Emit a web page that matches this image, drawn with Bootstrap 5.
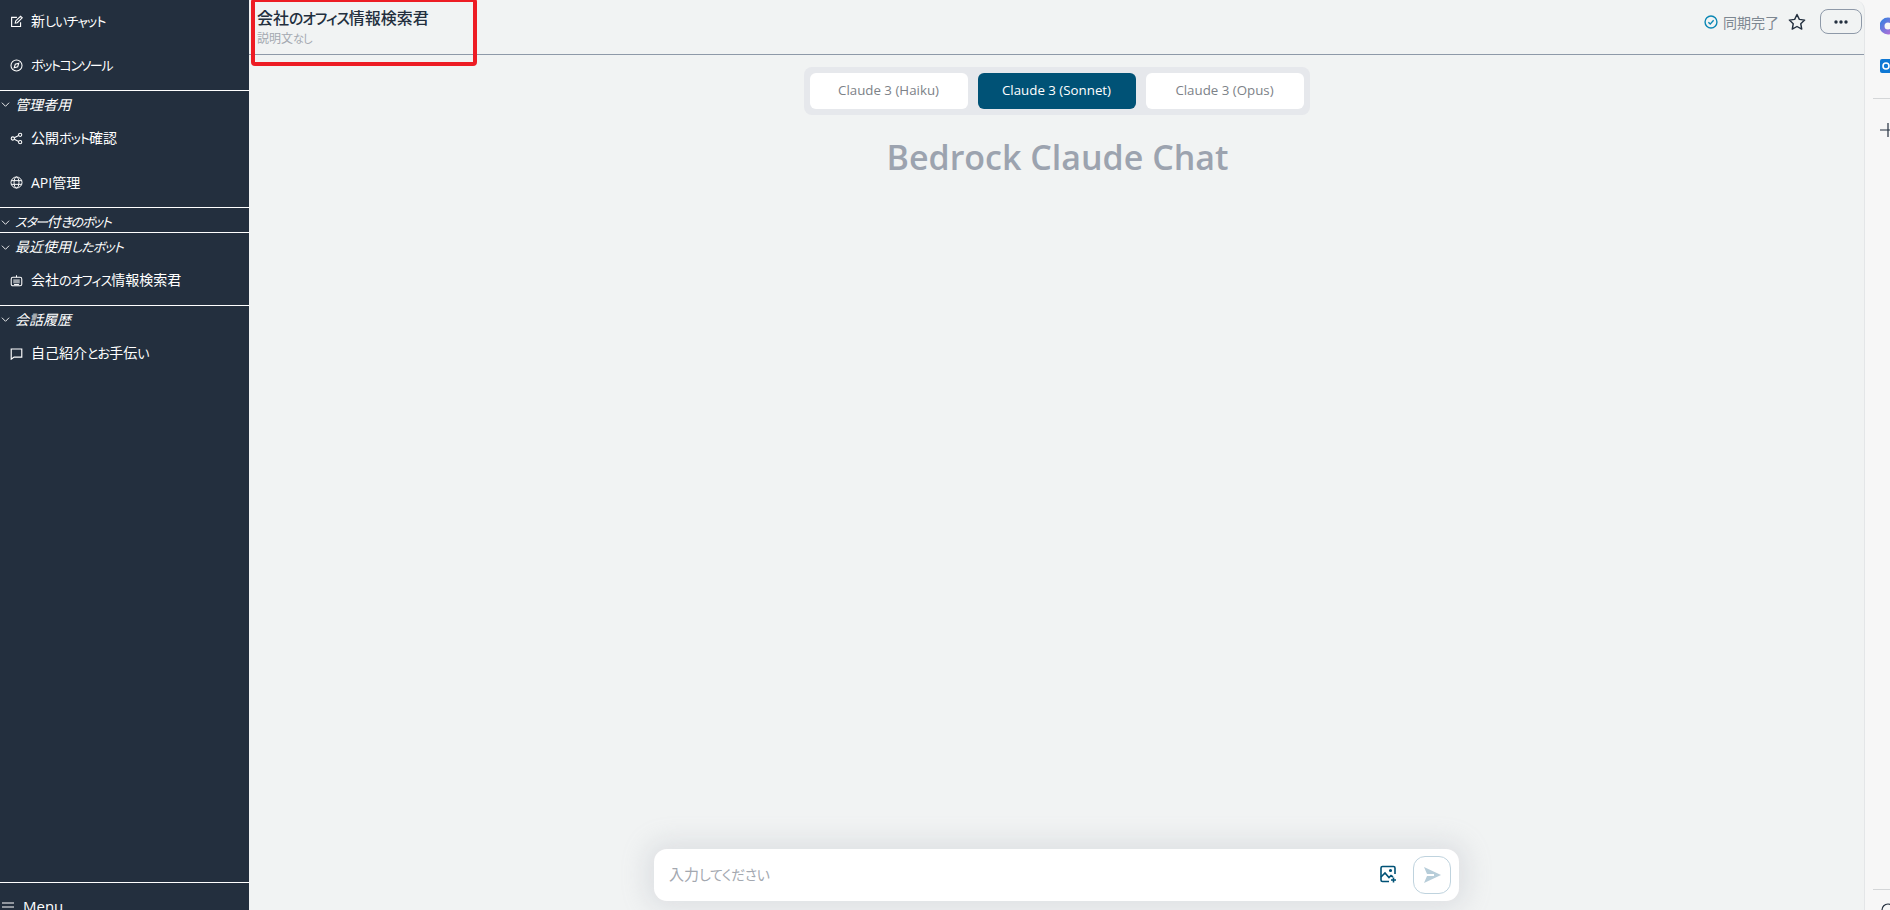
<!DOCTYPE html>
<html lang="ja">
<head>
<meta charset="utf-8">
<title>Bedrock Claude Chat</title>
<link href="https://cdn.jsdelivr.net/npm/bootstrap@5.3.0/dist/css/bootstrap.min.css" rel="stylesheet">
<style>
html,body{height:100%;overflow:hidden}
body{font-family:"Open Sans","Noto Sans CJK JP",sans-serif;font-feature-settings:"palt";background:#f7f7f7;color:#232f3e;font-size:14px}
.kn{font-size:.93em;letter-spacing:-.07em}
.kn-tight{letter-spacing:-.11em}
.app-shell{height:910px;position:relative}
.side-nav{width:249px;background:#232f3e;color:#fff;flex:none}
.nav-row{height:44px;padding-left:10px;padding-bottom:2px;gap:8px;font-size:14px;color:#fff}
.nav-row svg{width:13px;height:13px;flex:none}
.sec-head{height:26px;padding-left:1px;gap:5px;font-style:italic;font-size:14px;color:#fff}
.sec-head svg{width:9px;height:9px;flex:none}
.sec-short{height:24px;padding-top:4px}
.sec-low{padding-top:2px}
.sec-rule{border-top:1px solid #fff;margin-top:2px}
.nav-foot{border-top:1px solid #fff;height:28px;padding:13px 0 0 2px;gap:9px;margin-top:auto;overflow:hidden;line-height:20px;font-size:15px}
.nav-foot svg{width:12px;height:10px;flex:none;margin-top:6px}
.main-pane{width:1616px;background:#f1f3f3;border-right:1px solid #e4e6e8;border-top-right-radius:10px;position:relative;overflow:hidden}
.top-bar{height:55px;border-bottom:1px solid #8e99a8;padding:8px 2px 0 8px}
.bot-title{font-size:16px;font-weight:500;line-height:20px;color:#232f3e}
.bot-desc{font-size:12px;line-height:16px;margin-top:3px;color:#a3a8b0}
.sync-state{color:#7d8791;font-size:14px;gap:5px;margin-right:8px}
.more-btn{width:42px;height:25px;border:1px solid #8e99a8;border-radius:8px;margin-left:13px;background:transparent;padding:0;margin-top:-1px}
.model-bar{background:#e6e8ec;border-radius:8px;padding:6px;gap:10px;width:506px;margin:12px auto 0}
.model-btn{width:158px;height:36px;border-radius:6px;background:#fff;border:0;color:#7d8288;font-size:13.3px;padding:0}
.model-on{background:#005276;color:#fff}
.hero-title{font-size:34px;font-weight:600;color:#9ca3af;line-height:48px;margin:18px 0 0 2px;text-align:center}
.composer-zone{margin-top:auto;height:80px;padding-top:19px}
.composer{width:805px;height:52px;margin:0 auto;background:#fff;border-radius:13px;box-shadow:0 0 24px 9px rgba(160,165,178,.22);padding:0 8px 2px 15px}
.composer-hint{color:#a3a8b0;font-size:15px}
.composer-hint .kn{letter-spacing:-.03em}
.attach-btn{width:18px;height:18px;margin-right:16px;flex:none}
.send-btn{width:38px;height:38px;border:1px solid #bfd3de;border-radius:12px;background:#fff;padding:0;margin-top:2px}
.red-mark{position:absolute;left:251px;top:-2px;width:226px;height:68px;border:4px solid #ed1c24;border-radius:4px;pointer-events:none}
.app-rail{flex:1;position:relative;overflow:hidden}
.rail-rule{height:1px;background:#d4d6d8;margin-left:8px}
.rail-icon{width:16px;height:18px;margin-left:15px;flex:none}
</style>
</head>
<body>
<div class="app-shell d-flex">
  <aside class="side-nav d-flex flex-column">
    <div class="nav-row d-flex align-items-center"><svg viewBox="0 0 16 16" fill="none" stroke="#fff" stroke-width="1.4"><path d="M13 9v5.2H2V3h6.5"/><path d="M6.5 10l.5-2.7L13 1.5l2 2-6 6z"/></svg><span>新<span class="kn">しいチャット</span></span></div>
    <div class="nav-row d-flex align-items-center"><svg viewBox="0 0 16 16" fill="none" stroke="#fff" stroke-width="1.3"><circle cx="8" cy="8" r="6.8"/><path d="M5.2 10.8l1.3-4.3 4.3-1.3-1.3 4.3z"/></svg><span><span class="kn kn-tight">ボットコンソール</span></span></div>
    <div class="sec-rule"></div>
    <div class="sec-head d-flex align-items-center"><svg viewBox="0 0 10 10" fill="none" stroke="#fff"><path d="M1 3l4 4 4-4"/></svg><span>管理者用</span></div>
    <div class="nav-row d-flex align-items-center"><svg viewBox="0 0 16 16" fill="none" stroke="#fff" stroke-width="1.3"><circle cx="3.5" cy="8" r="2"/><circle cx="12.5" cy="3.5" r="2"/><circle cx="12.5" cy="12.5" r="2"/><path d="M5.3 7.1l5.4-2.7M5.3 8.9l5.4 2.7"/></svg><span>公開<span class="kn">ボット</span>確認</span></div>
    <div class="nav-row d-flex align-items-center"><svg viewBox="0 0 16 16" fill="none" stroke="#fff" stroke-width="1.2"><circle cx="8" cy="8" r="6.8"/><ellipse cx="8" cy="8" rx="3" ry="6.8"/><path d="M1.5 5.7h13M1.5 10.3h13"/></svg><span>API管理</span></div>
    <div class="sec-rule"></div>
    <div class="sec-head sec-short d-flex align-items-center"><svg viewBox="0 0 10 10" fill="none" stroke="#fff"><path d="M1 3l4 4 4-4"/></svg><span><span class="kn kn-tight">スター</span>付<span class="kn kn-tight">きのボット</span></span></div>
    <div class="sec-rule mt-0"></div>
    <div class="sec-head sec-low d-flex align-items-center"><svg viewBox="0 0 10 10" fill="none" stroke="#fff"><path d="M1 3l4 4 4-4"/></svg><span>最近使用<span class="kn">したボット</span></span></div>
    <div class="nav-row d-flex align-items-center"><svg viewBox="0 0 16 16" fill="none" stroke="#fff" stroke-width="1.3"><rect x="1.5" y="4" width="13" height="10.5" rx="2"/><path d="M8 1.5V4"/><rect x="4" y="6.5" width="8" height="5" fill="#fff" opacity=".55" stroke="none"/><path d="M5 13h6"/></svg><span>会社<span class="kn">のオフィス</span>情報検索君</span></div>
    <div class="sec-rule"></div>
    <div class="sec-head d-flex align-items-center"><svg viewBox="0 0 10 10" fill="none" stroke="#fff"><path d="M1 3l4 4 4-4"/></svg><span>会話履歴</span></div>
    <div class="nav-row d-flex align-items-center"><svg viewBox="0 0 16 16" fill="none" stroke="#fff" stroke-width="1.4"><path d="M1.5 2.5h13v10H5l-3.5 2.5z"/></svg><span>自己紹介<span class="kn">と</span><span class="kn">お</span>手伝<span class="kn">い</span></span></div>
    <div class="nav-foot d-flex align-items-start"><svg viewBox="0 0 12 10" stroke="#fff" stroke-width="1.2"><path d="M0 1h12M0 5h12M0 9h12"/></svg><span>Menu</span></div>
  </aside>

  <main class="main-pane d-flex flex-column">
    <header class="top-bar d-flex justify-content-between align-items-start">
      <div>
        <div class="bot-title">会社<span class="kn">のオフィス</span>情報検索君</div>
        <div class="bot-desc">説明文<span class="kn">なし</span></div>
      </div>
      <div class="d-flex align-items-center" style="height:28px">
        <div class="sync-state d-flex align-items-center"><svg width="14" height="14" viewBox="0 0 16 16" fill="none" stroke="#0b87b4" stroke-width="1.6"><circle cx="8" cy="8" r="6.8"/><path d="M5 8.3l2.1 2.1L11 6"/></svg><span>同期完了</span></div>
        <svg width="20" height="20" viewBox="0 0 24 24" fill="none" stroke="#232f3e" stroke-width="1.7" stroke-linejoin="round"><path d="M12 3l2.8 5.9 6.4.8-4.7 4.4 1.2 6.4L12 17.4l-5.7 3.1 1.2-6.4-4.7-4.4 6.4-.8z"/></svg>
        <button class="more-btn d-flex align-items-center justify-content-center" type="button"><svg width="14" height="4" viewBox="0 0 14 4" fill="#232f3e"><circle cx="2" cy="2" r="1.7"/><circle cx="7" cy="2" r="1.7"/><circle cx="12" cy="2" r="1.7"/></svg></button>
      </div>
    </header>

    <div class="model-bar d-flex">
      <button class="model-btn" type="button">Claude 3 (Haiku)</button>
      <button class="model-btn model-on" type="button">Claude 3 (Sonnet)</button>
      <button class="model-btn" type="button">Claude 3 (Opus)</button>
    </div>
    <h1 class="hero-title">Bedrock Claude Chat</h1>

    <div class="composer-zone">
      <div class="composer d-flex align-items-center">
        <div class="composer-hint flex-grow-1">入力<span class="kn">してください</span></div>
        <svg class="attach-btn" viewBox="0 0 18 18" fill="none" stroke="#005276" stroke-width="1.6"><path d="M16 9V3a1.5 1.5 0 0 0-1.5-1.5h-11A1.5 1.5 0 0 0 2 3v12a1.5 1.5 0 0 0 1.5 1.5H10"/><path d="M2 12l4-4 4 4.5 2-2 2 1.5"/><circle cx="11.5" cy="5.5" r=".8"/><path d="M14.5 12.5v5M12 15h5"/></svg>
        <button class="send-btn d-flex align-items-center justify-content-center" type="button"><svg width="20" height="20" viewBox="0 0 20 20" fill="#b7cdd9"><path d="M2 2l17 8-17 8 3-7h7V9H5z"/></svg></button>
      </div>
    </div>
  </main>

  <div class="app-rail d-flex flex-column">
    <svg class="rail-icon" style="margin-top:17px" viewBox="0 0 16 18"><defs><linearGradient id="cp" x1="0" y1="0" x2="1" y2="1"><stop offset="0" stop-color="#3f7fe0"/><stop offset="1" stop-color="#b86fd8"/></linearGradient></defs><circle cx="8" cy="9" r="6" fill="none" stroke="url(#cp)" stroke-width="5"/></svg>
    <svg class="rail-icon" style="margin-top:22px" viewBox="0 0 16 18"><rect x="0" y="2" width="16" height="14" rx="2" fill="#0f78d4"/><circle cx="6" cy="9" r="3" fill="none" stroke="#fff" stroke-width="1.6"/></svg>
    <div class="rail-rule" style="margin-top:23px"></div>
    <svg class="rail-icon" style="margin-top:22px" viewBox="0 0 16 18" stroke="#232f3e" stroke-width="1.2"><path d="M0 9h16M8 2v14"/></svg>
    <div class="rail-rule" style="margin-top:auto;margin-bottom:12px"></div>
    <svg class="rail-icon" style="height:8px;margin-bottom:0" viewBox="0 0 16 8" fill="none" stroke="#232f3e" stroke-width="1.2"><circle cx="8" cy="8" r="6"/></svg>
  </div>

  <div class="red-mark"></div>
</div>
<script src="https://cdn.jsdelivr.net/npm/bootstrap@5.3.0/dist/js/bootstrap.bundle.min.js"></script>
</body>
</html>
